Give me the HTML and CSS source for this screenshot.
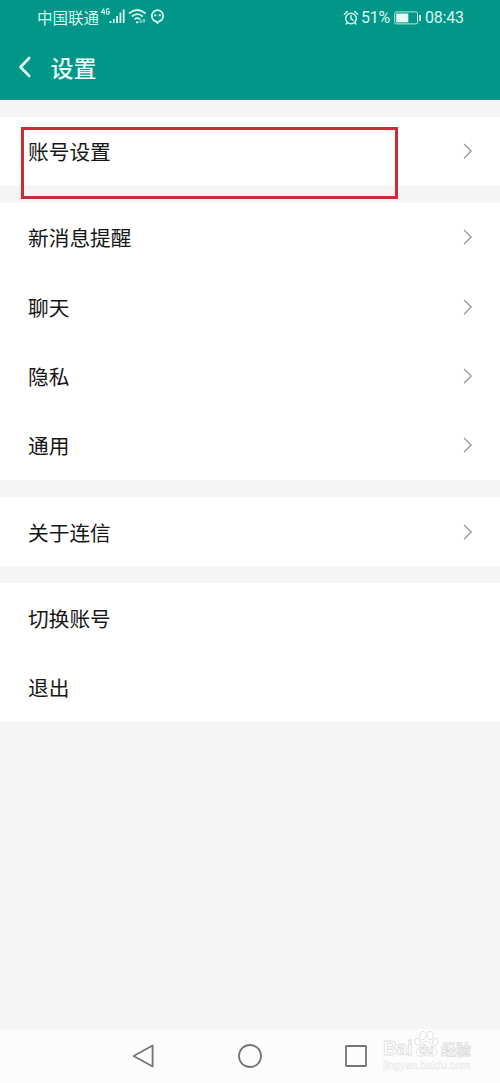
FILE: index.html
```html
<!DOCTYPE html>
<html lang="zh-CN">
<head>
<meta charset="utf-8">
<title>设置</title>
<link rel="stylesheet" href="styles.css">
</head>
<body>
<svg width="0" height="0" class="defs"><symbol id="chevron" viewBox="0 0 10 18"><path d="M1 2 8.2 9 1 16.200" fill="none" stroke="#999" stroke-width="1.3"/></symbol></svg>
<div class="screen">
  <header class="header">
    <div class="status">
      <span class="carrier">中国联通</span>
      <svg class="signals" width="66" height="20" viewBox="0 0 66 20" fill="none" stroke="#d9f8f2">
        <path d="M4 1.500 1.400 5.500H5.200M4.200 3V7.500M9.200 2.600Q9 1.500 7.900 1.500 6.600 1.500 6.600 3V6Q6.600 7.300 7.900 7.300 9.200 7.300 9.200 6V4.600H8" stroke-width="1.100"/>
        <path d="M10.500 14V16M13.800 12V16M17.100 9V16M20.400 5.500V16M23.700 2.500V16" stroke-width="1.800"/>
        <path d="M29 6.500Q37.300-.5 45.600 6.500M31.800 9.500Q37.300 4.800 42.800 9.500M34.500 12.300Q37.300 10 40 12.300" stroke-width="1.700"/>
        <path d="M36 15.300H38.500" stroke-width="1.800"/><path d="M41 12.300V15.500M39.800 14.400 41 15.700 42.200 14.400M44 16V12.500M42.900 13.700 44 12.400 45.200 13.700" stroke-width=".8"/>
        <path d="M57.500 15.900 55.800 14.300A5.700 5.700 0 1 1 59.200 14.300Z" stroke-width="1.800"/>
        <path d="M54.300 8.300h2M58.700 8.300h2" stroke-width="2"/>
      </svg>
      <svg class="alarm" width="16" height="18" viewBox="0 0 16 18" fill="none" stroke="#d9f8f2" stroke-width="1.400" stroke-linecap="round">
        <circle cx="8" cy="9.500" r="5.300"/><path d="M8 6.500V9.800L10.200 11.200M1.300 5.300 4.300 2.500M14.700 5.300 11.700 2.500M4.200 13.700 3.100 15M11.800 13.700 12.900 15"/>
      </svg>
      <span class="percent">51%</span>
      <svg class="battery" width="28" height="14" viewBox="0 0 28 14"><rect x=".7" y=".9" width="22.800" height="12" rx="1.500" fill="none" stroke="#b9e9df" stroke-width="1"/><path d="M2.200 2.500H14.300V11.400H2.200Z" fill="#e3faf5"/><path d="M26 4V10" stroke="#d9f8f2" stroke-width="1.700"/></svg>
      <span class="time">08:43</span>
    </div>
    <div class="titlebar">
      <svg width="14" height="22" viewBox="0 0 14 22"><path d="M11.200 2 2.500 11 11.200 20" fill="none" stroke="#e8fffb" stroke-width="2.600" stroke-linecap="round" stroke-linejoin="round"/></svg>
      <h1>设置</h1>
    </div>
  </header>
  <main class="settings">
    <section class="group marked">
      <div class="row"><span>账号设置</span><svg class="go"><use href="#chevron"/></svg></div>
      <div class="highlight"></div>
    </section>
    <section class="group">
      <div class="row"><span>新消息提醒</span><svg class="go"><use href="#chevron"/></svg></div>
      <div class="row"><span>聊天</span><svg class="go"><use href="#chevron"/></svg></div>
      <div class="row"><span>隐私</span><svg class="go"><use href="#chevron"/></svg></div>
      <div class="row"><span>通用</span><svg class="go"><use href="#chevron"/></svg></div>
    </section>
    <section class="group">
      <div class="row"><span>关于连信</span><svg class="go"><use href="#chevron"/></svg></div>
    </section>
    <section class="group">
      <div class="row"><span>切换账号</span></div>
      <div class="row"><span>退出</span></div>
    </section>
  </main>
  <nav class="nav">
    <svg width="26" height="26" viewBox="0 0 26 26"><path d="M21.600 2.500V23.500L2.600 13Z"/></svg>
    <svg width="26" height="26" viewBox="0 0 26 26"><circle cx="13" cy="13" r="11"/></svg>
    <svg width="26" height="26" viewBox="0 0 26 26"><rect x="3" y="3" width="20" height="20" rx=".5"/></svg>
    <div class="watermark">
      <div class="brand">
        <span class="bai">Bai</span>
        <span class="paw"><svg width="28" height="30" viewBox="0 0 28 30"><ellipse cx="4" cy="12.500" rx="3.100" ry="4" transform="rotate(-12 4 12.500)"/><ellipse cx="10" cy="5.500" rx="3.300" ry="4.500"/><ellipse cx="18" cy="5.500" rx="3.300" ry="4.500"/><ellipse cx="24" cy="12.500" rx="3.100" ry="4" transform="rotate(12 24 12.500)"/><path d="M14 12C10 12 9 17 5 19.500 0 23 3 29 8 28.500Q14 27.500 20 28.500C25 29 28 23 23 19.500 19 17 18 12 14 12Z"/></svg><span class="du">du</span></span>
        <span class="exp">经验</span>
      </div>
      <div class="site">jingyan.baidu.com</div>
    </div>
  </nav>
</div>
</body>
</html>
```

FILE: styles.css
```css
* { box-sizing: border-box; }
body { margin: 0; font-family: "Noto Sans CJK SC", sans-serif; background: #f5f5f5; }
.defs { position: absolute; }
.screen { width: 500px; height: 1083px; display: flex; flex-direction: column; overflow: hidden; }
.header { height: 100px; background: #009788; color: #e8fffb; flex: none; }
.status { height: 35px; display: flex; align-items: center; padding-left: 37px; color: #d9f8f2; font-family: Roboto, "Noto Sans CJK SC", sans-serif; font-size: 16px; line-height: 20px; }
.carrier { font-family: "Noto Sans CJK SC", sans-serif; font-size: 15.5px; width: 63px; white-space: nowrap; padding-bottom: 2px; }
.signals { margin-top: -2px; }
.alarm { margin-left: 177px; }
.percent { margin-left: 2px; width: 31px; letter-spacing: -.2px; }
.battery { margin-left: 2px; }
.time { margin-left: 3px; letter-spacing: -.2px; }
.titlebar { height: 65px; display: flex; align-items: center; gap: 18.5px; padding: 0 0 1px 18px; }
h1 { margin: 0; font-size: 23px; line-height: 30px; font-weight: 500; }
.settings { flex: 1; padding-top: 16.5px; display: flex; flex-direction: column; gap: 16.7px; }
.group { background: #fff; flex: none; }
.row { height: 69.4px; padding: 0 27px 0 28px; display: flex; align-items: center; justify-content: space-between; color: #171717; font-size: 20.7px; line-height: 30px; }
.go { width: 10px; height: 18px; }
.marked { position: relative; }
.highlight { position: absolute; left: 21px; top: 10.5px; width: 377px; height: 72px; border: 3px solid #cc2c35; }
.nav { position: relative; height: 54px; flex: none; background: #fcfcfc; display: flex; justify-content: center; align-items: center; gap: 80px; }
.nav > svg { fill: none; stroke: #757575; stroke-width: 1.8; stroke-linejoin: round; }
.watermark { position: absolute; left: 383px; top: 0; width: 92px; color: #fff; }
.brand { display: flex; align-items: flex-end; height: 30px; }
.bai, .du, .exp { -webkit-text-stroke: .8px #dcdcdc; font-weight: 700; }
.bai { font: 700 19.5px/22px "Liberation Sans", sans-serif; width: 31px; letter-spacing: -.3px; }
.paw { position: relative; width: 27px; height: 30px; }
.paw svg { display: block; width: 25px; height: 30px; fill: #fff; stroke: #dcdcdc; stroke-width: 1; }
.du { position: absolute; left: 5px; top: 14px; font: 700 12px/14px "Liberation Sans", sans-serif; }
.exp { font-size: 15px; line-height: 20px; white-space: nowrap; }
.site { font: 10.8px/12px "Liberation Sans", sans-serif; color: #fff; -webkit-text-stroke: .5px #e8e8e8; white-space: nowrap; }
```
